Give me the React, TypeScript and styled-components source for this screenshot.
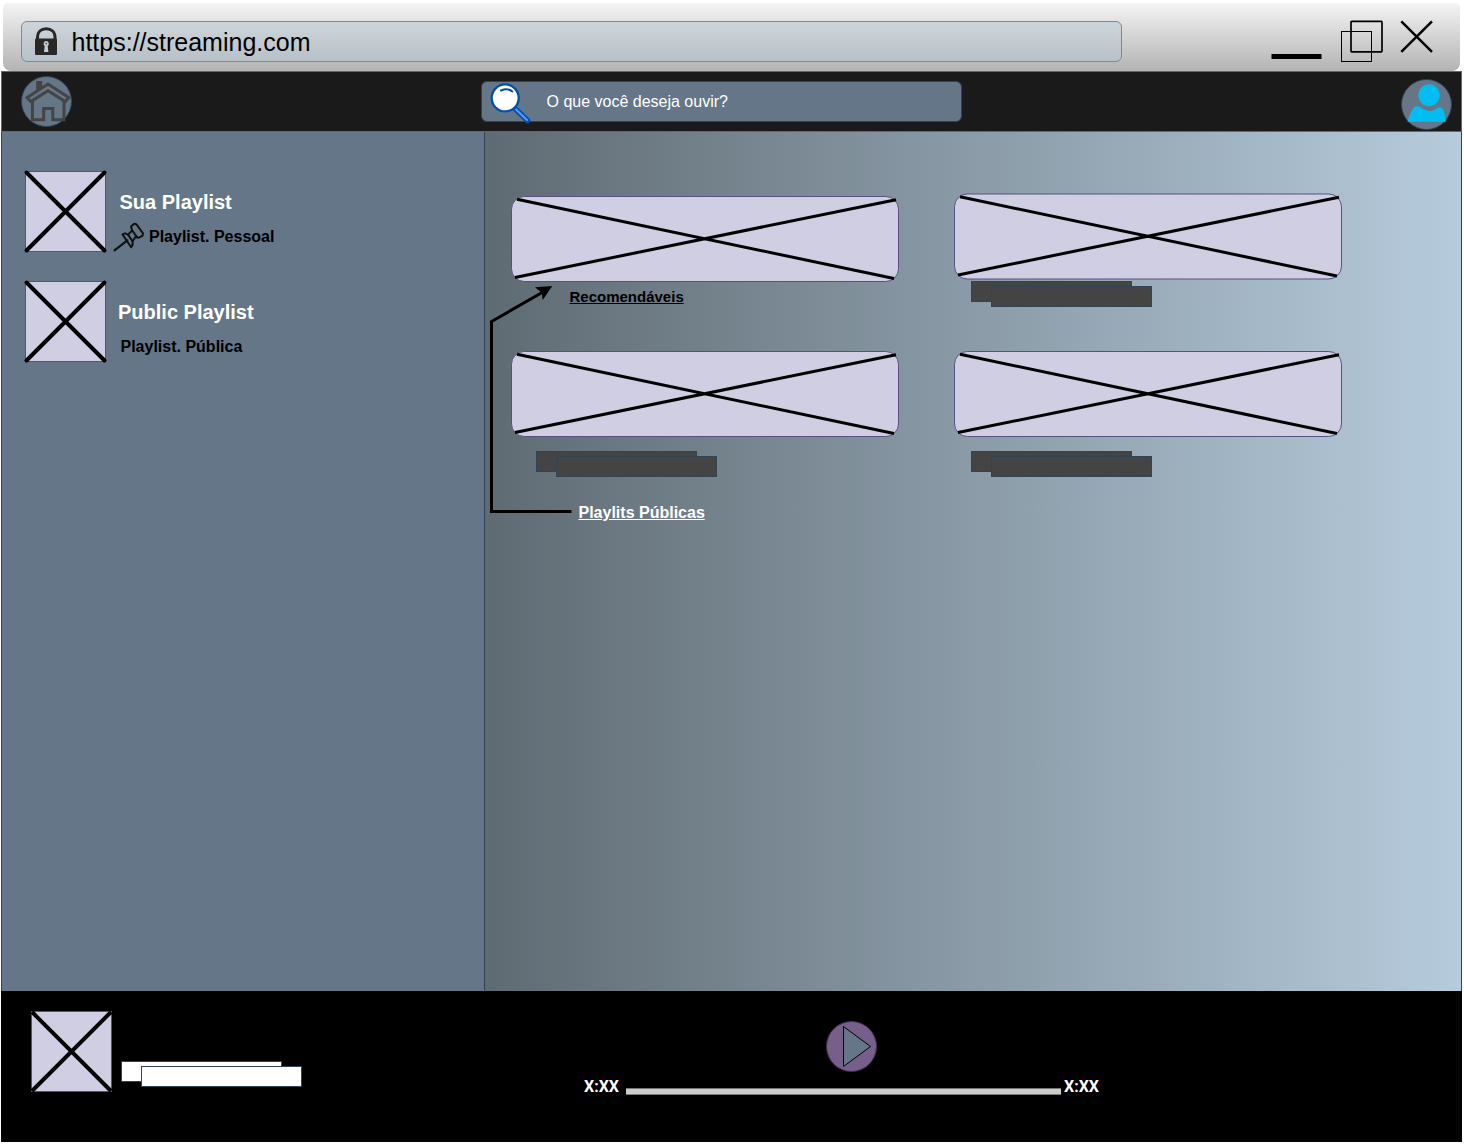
import React from 'react';
import styled, { createGlobalStyle } from 'styled-components';

const GlobalStyle = createGlobalStyle`
  * { box-sizing: border-box; }
  body {
    margin: 0;
    background: #fff;
    font-family: "Liberation Sans", Arial, Helvetica, sans-serif;
  }
  svg { display: block; flex: none; overflow: visible; }
`;

const Page = styled.div`
  width: 1464px;
  height: 1144px;
  padding: 3px 2px 2px 1px;
  display: flex;
  flex-direction: column;
  overflow: hidden;
`;

const WindowBar = styled.header`
  height: 68px;
  margin: 0 2px 0 2px;
  padding: 18px 26px 0 18px;
  display: flex;
  align-items: flex-start;
  border-radius: 5px 5px 8px 8px;
  background: linear-gradient(#f4f4f4, #b3b3b3);
`;

const AddressBar = styled.div`
  width: 1101px;
  height: 41px;
  padding-left: 13px;
  display: flex;
  align-items: center;
  gap: 14.5px;
  border: 1px solid #788b9d;
  border-radius: 6px;
  background: linear-gradient(#ced5da, #b8c0c8);
`;

const Url = styled.span`
  padding-top: 1px;
  font-size: 25px;
  line-height: 28px;
`;

const WindowButtons = styled.div`
  margin: -1px 0 0 149px;
  display: flex;
`;

const TopBar = styled.nav`
  height: 61px;
  padding: 0 9px 0 19px;
  display: flex;
  align-items: flex-start;
  justify-content: space-between;
  background: #1a1a1a;
  border: 1px solid #666;
`;

const IconSlot = styled.div<{ $top: number }>`
  margin-top: ${(p) => p.$top}px;
`;

const SearchBox = styled.div`
  width: 481px;
  height: 41px;
  margin-top: 9px;
  margin-right: 30px;
  padding: 1px 0 0 8px;
  display: flex;
  align-items: flex-start;
  gap: 14.5px;
  border: 1px solid #314354;
  border-radius: 6px;
  background: #647687;
  color: #fff;
  font-size: 16px;
  line-height: 38px;
`;

const Body = styled.div`
  height: 859px;
  display: flex;
  border-left: 1px solid #314354;
  border-right: 1px solid #314354;
`;

const Sidebar = styled.aside`
  width: 483px;
  padding: 39px 0 0 23px;
  display: flex;
  flex-direction: column;
  gap: 29px;
  background: #647687;
  border-right: 1px solid #314354;
`;

const PlaylistRow = styled.div`
  height: 81px;
  display: flex;
`;

const PlaylistText = styled.div<{ $indent: number }>`
  padding: 20px 0 0 ${(p) => p.$indent}px;
  font-weight: 700;
`;

const PlaylistTitle = styled.div`
  color: #fff;
  font-size: 20px;
  line-height: 22px;
`;

const PlaylistKind = styled.div<{ $indent: number }>`
  display: flex;
  align-items: center;
  gap: 4.500px;
  height: 30px;
  margin-top: 9px;
  margin-left: ${(p) => p.$indent}px;
  font-size: 16px;
`;

const Main = styled.main`
  position: relative;
  flex: 1;
  padding: 62px 0 0 26px;
  background: linear-gradient(90deg, #5f6b73, #b6cbdc);
`;

const CardGrid = styled.div`
  display: grid;
  grid-template-columns: 388px 388px;
  grid-template-rows: 157px 157px;
  column-gap: 55px;
`;

const Card = styled.section<{ $top: number }>`
  padding-top: ${(p) => p.$top}px;
`;

const Caption = styled.div`
  margin: 6px 0 0 58.5px;
  font-size: 15px;
  line-height: 17px;
  font-weight: 700;
  text-decoration: underline;
`;

const Bars = styled.div<{ $top: number; $left: number }>`
  display: grid;
  width: 181px;
  margin: ${(p) => p.$top}px 0 0 ${(p) => p.$left}px;
`;

const Bar = styled.div<{ $fill: string; $front?: boolean }>`
  grid-area: 1 / 1;
  width: 161px;
  height: 21px;
  margin: ${(p) => (p.$front ? '5px 0 0 20px' : '0')};
  background: ${(p) => p.$fill};
  border: 1px solid #314354;
`;

const PublicLink = styled.div`
  margin: -4px 0 0 67.5px;
  width: max-content;
  color: #fff;
  font-size: 16px;
  line-height: 18px;
  font-weight: 700;
  text-decoration: underline;
`;

const Connector = styled.svg`
  position: absolute;
  left: 0;
  top: 149px;
`;

const Player = styled.footer`
  height: 151px;
  padding: 20px 0 0 30px;
  display: flex;
  background: #000;
`;

const Controls = styled.div`
  margin: 10px 0 0 282px;
  display: flex;
  flex-direction: column;
`;

const PlaySlot = styled.div`
  margin-left: 242px;
`;

const Timeline = styled.div`
  display: flex;
  margin-top: 6px;
`;

const Time = styled.span`
  width: 35px;
  color: #fff;
  font-family: Roboto, "Liberation Sans", sans-serif;
  font-size: 16px;
  line-height: 17px;
  font-weight: 700;
  white-space: nowrap;
`;

const Track = styled.div`
  width: 435px;
  height: 7px;
  margin: 10px 3px 0 7px;
  background: #ccc;
  border: solid #777;
  border-width: 1px 0;
`;

const LockIcon = () => (
  <svg width="22" height="27" viewBox="35 28 22 27">
    <path d="M37.500 39.500V37c0-5 3.500-8.300 8.700-8.300s8.800 3.300 8.800 8.300v2.500" fill="none" stroke="#282828" strokeWidth="3" />
    <rect x="35" y="38.500" width="22" height="16.500" rx="1" fill="#282828" />
    <path d="M46.200 41a2.700 2.700 0 0 1 1.500 4.900l.7 6h-4.400l.7-6A2.700 2.700 0 0 1 46.200 41Z" fill="#c4cbd1" />
    <circle cx="46.200" cy="43.600" r="0.900" fill="#555" />
  </svg>
);

const WindowIcons = () => (
  <svg width="163" height="42" viewBox="1271 20 163 42" fill="none" stroke="#000">
    <path d="M1271.500 56.500h50" strokeWidth="5" />
    <rect x="1351" y="21.300" width="31" height="30.500" rx="0.700" strokeWidth="1.700" />
    <rect x="1341.500" y="31.500" width="30" height="30" strokeWidth="1" />
    <path d="M1401.300 21.300l30.700 30.500M1432 21.300l-30.700 30.500" strokeWidth="2.500" />
  </svg>
);

const HomeIcon = () => (
  <svg width="51" height="51" viewBox="21 76 51 51">
    <circle cx="46.500" cy="101.500" r="25" fill="#647687" stroke="#314354" />
    <path d="M36.200 81h6v6l-6 4z" fill="#444" />
    <g fill="none" stroke="#444" strokeWidth="3">
      <path d="M48 84L68.800 97.500L65.200 101.500L48 90.800L30.800 101.500L27.200 97.500Z" />
      <path d="M32.400 101V119.700H43.700V108.400H52.800V119.700H64V101" />
    </g>
  </svg>
);

const SearchIcon = () => (
  <svg width="42" height="40" viewBox="490.500 83.500 42 40" strokeLinecap="round">
    <path d="M516 109.500l12 11.500" stroke="#0050b0" strokeWidth="5.600" />
    <path d="M516.500 110l11 10.500" stroke="#5a9cf2" strokeWidth="2" />
    <circle cx="505.700" cy="98.400" r="13.500" fill="#fff" stroke="#0050b0" strokeWidth="2.300" />
    <path d="M501.500 91c3.500-1.700 8-1.600 11.300 1" fill="none" stroke="#0050b0" strokeWidth="2" />
  </svg>
);

const UserIcon = () => (
  <svg width="51" height="51" viewBox="1401 79 51 51">
    <circle cx="1426.500" cy="104.500" r="25" fill="#647687" stroke="#314354" />
    <ellipse cx="1429" cy="95.300" rx="10.700" ry="11" fill="#00bef2" />
    <path d="M1407.500 121.700c1-4.500 3-9.500 5.500-13 2-2.800 4.500-3 7.500-1.200 3.500 2 6 3.600 9.500 3.600 4 0 6-2.400 9-3.500 2-.6 3.300.2 4.200 2 1.200 2.700 2.200 8 2.500 12.100Z" fill="#00bef2" />
  </svg>
);

const PinIcon = () => (
  <svg width="31" height="30" viewBox="114 222 31 30" fill="none" stroke="#111" strokeWidth="2" strokeLinejoin="round" strokeLinecap="round">
    <path d="M114.500 250.300L127.300 240.300" strokeWidth="2.200" />
    <path d="M122.500 234.500L125 233.300L128 234.600L132.200 230.500L131 226.500L134.200 223.700L136.300 224.200L143 233.400L142.500 235.800L138.700 237.700L135.500 237L132.500 241.300L132.700 244.500L131.200 247.200Z" />
    <path d="M128 234.600L132.500 241.300M132.200 230.500L137 237.200" />
  </svg>
);

const Cover = ({ inset = false }: { inset?: boolean }) => (
  <svg width="81" height="81" viewBox="0 0 81 81">
    <rect x="0.500" y="0.500" width="80" height="80" fill="#d0cee2" stroke="#56517e" />
    <path
      d={inset ? 'M1 1L80 80M80 1L1 80' : 'M1.500 1.500L79.500 79.500M79.500 1.500L1.500 79.500'}
      stroke="#000"
      strokeWidth="4"
      strokeLinecap={inset ? 'butt' : 'round'}
    />
  </svg>
);

const Banner = ({ shift = 0 }: { shift?: number }) => (
  <svg width="388" height="86" viewBox={`0 ${shift} 388 86`}>
    <rect x="0.500" y="0.500" width="387" height="85" rx="12.750" fill="#d0cee2" stroke="#56517e" />
    <path d="M6 3.300L383 82.500M4 81.500L385 3.700" stroke="#000" strokeWidth="3" />
  </svg>
);

const PlayIcon = () => (
  <svg width="51" height="51" viewBox="826 1021 51 51">
    <circle cx="851.500" cy="1046.500" r="25" fill="#76608a" stroke="#432d57" />
    <path d="M843.500 1026.500L870.500 1046.500L843.500 1066.500Z" fill="#647687" stroke="#000" />
  </svg>
);

const StackedBars = ({ top, left, fill }: { top: number; left: number; fill: string }) => (
  <Bars $top={top} $left={left}>
    <Bar $fill={fill} />
    <Bar $fill={fill} $front />
  </Bars>
);

export default function App() {
  return (
    <>
      <GlobalStyle />
      <Page>
        <WindowBar>
          <AddressBar>
            <LockIcon />
            <Url>https://streaming.com</Url>
          </AddressBar>
          <WindowButtons>
            <WindowIcons />
          </WindowButtons>
        </WindowBar>
        <TopBar>
          <IconSlot $top={4}>
            <HomeIcon />
          </IconSlot>
          <SearchBox>
            <SearchIcon />
            <span>O que você deseja ouvir?</span>
          </SearchBox>
          <IconSlot $top={7}>
            <UserIcon />
          </IconSlot>
        </TopBar>
        <Body>
          <Sidebar>
            <PlaylistRow>
              <Cover />
              <PlaylistText $indent={13.5}>
                <PlaylistTitle>Sua Playlist</PlaylistTitle>
                <PlaylistKind $indent={-6}>
                  <PinIcon />
                  <span>Playlist. Pessoal</span>
                </PlaylistKind>
              </PlaylistText>
            </PlaylistRow>
            <PlaylistRow>
              <Cover />
              <PlaylistText $indent={12}>
                <PlaylistTitle>Public Playlist</PlaylistTitle>
                <PlaylistKind $indent={2.5}>Playlist. Pública</PlaylistKind>
              </PlaylistText>
            </PlaylistRow>
          </Sidebar>
          <Main>
            <CardGrid>
              <Card $top={2}>
                <Banner />
                <Caption>Recomendáveis</Caption>
              </Card>
              <Card $top={0}>
                <Banner shift={0.5} />
                <StackedBars top={1} left={17} fill="#444" />
              </Card>
              <Card $top={0}>
                <Banner />
                <StackedBars top={14} left={25} fill="#444" />
              </Card>
              <Card $top={0}>
                <Banner />
                <StackedBars top={14} left={17} fill="#444" />
              </Card>
            </CardGrid>
            <PublicLink>Playlits Públicas</PublicLink>
            <Connector width="90" height="240" viewBox="485 281 90 240">
              <path d="M571.500 511.500H491.500V321.500L543 292" fill="none" stroke="#000" strokeWidth="3" />
              <path d="M552.300 286L542.700 300L541.800 292.700L535 287.300Z" fill="#000" />
            </Connector>
          </Main>
        </Body>
        <Player>
          <Cover inset />
          <StackedBars top={50} left={9} fill="#fff" />
          <Controls>
            <PlaySlot>
              <PlayIcon />
            </PlaySlot>
            <Timeline>
              <Time>X:XX</Time>
              <Track />
              <Time>X:XX</Time>
            </Timeline>
          </Controls>
        </Player>
      </Page>
    </>
  );
}
